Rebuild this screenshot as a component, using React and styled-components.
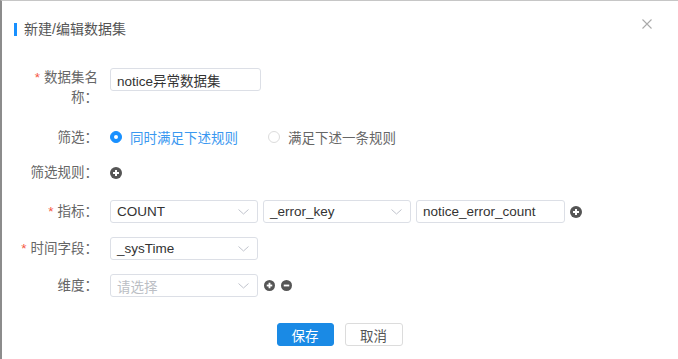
import React from 'react';
import styled, { createGlobalStyle } from 'styled-components';

const Global = createGlobalStyle`
  html, body { margin: 0; padding: 0; background: #fff; }
  body { font-family: "Liberation Sans", "Noto Sans CJK SC", sans-serif; }
  * { box-sizing: border-box; }
`;

const Dialog = styled.div`
  width: 678px;
  height: 359px;
  background: #fff;
  border-left: 2px solid #8c8c8c;
  border-top: 1px solid #c6c6c6;
  display: flex;
  flex-direction: column;
`;

const Header = styled.div`
  height: 56px;
  display: flex;
  align-items: center;
  justify-content: space-between;
  padding: 0 26px 0 12px;
`;

const Title = styled.div`
  border-left: 3px solid #1890ff;
  padding-left: 7px;
  font-size: 14px;
  line-height: 13px;
  color: #555;
`;

const Close = styled.button`
  align-self: flex-start;
  margin-top: 18px;
  width: 10px;
  height: 10px;
  padding: 0;
  border: 0;
  background: transparent;
  display: flex;
`;

const Form = styled.div`
  padding: 11px 0 0 16px;
  display: flex;
  flex-direction: column;
`;

const Row = styled.div`
  display: flex;
  align-items: flex-start;
  margin-bottom: ${p => p.$mb || 0}px;
`;

const Label = styled.div`
  width: 92px;
  flex-shrink: 0;
  padding-right: 12px;
  text-align: right;
  font-size: 13.5px;
  color: #666;
  line-height: ${p => p.$lh || 23}px;
  &::before {
    content: ${p => (p.$required ? "'*'" : "none")};
    color: #f5553f;
    margin-right: 4px;
  }
`;

const Controls = styled.div`
  display: flex;
  align-items: center;
  height: 23px;
  gap: ${p => p.$gap || 5}px;
`;

const TextInput = styled.input`
  width: ${p => p.$w || 148}px;
  height: 23px;
  border: 1px solid #dcdfe6;
  border-radius: 3px;
  padding: 0 6px;
  font-family: inherit;
  font-size: 13.5px;
  color: #333;
  outline: none;
  background: #fff;
`;

const SelectBox = styled.div`
  width: ${p => p.$w || 148}px;
  height: 23px;
  border: 1px solid #dcdfe6;
  border-radius: 3px;
  padding: 0 8px 0 6px;
  display: flex;
  align-items: center;
  justify-content: space-between;
  font-size: 13.5px;
  color: ${p => (p.$placeholder ? '#bbbec4' : '#333')};
  background: #fff;
`;

const RadioGroup = styled.div`
  display: flex;
  align-items: center;
  height: 23px;
  margin-top: -1px;
`;

const RadioItem = styled.label`
  display: flex;
  align-items: center;
  margin-left: ${p => p.$ml || 0}px;
  font-size: 13.5px;
  color: ${p => (p.$checked ? '#3a98f0' : '#666')};
`;

const RadioDot = styled.span`
  width: 12px;
  height: 12px;
  border-radius: 50%;
  border: 1px solid ${p => (p.$checked ? '#1890ff' : '#dcdcdc')};
  background: ${p => (p.$checked ? '#1890ff' : '#fff')};
  margin-right: 8px;
  display: flex;
  align-items: center;
  justify-content: center;
  &::after {
    content: '';
    width: 4px;
    height: 4px;
    border-radius: 50%;
    background: ${p => (p.$checked ? '#fff' : 'transparent')};
  }
`;

const Footer = styled.div`
  margin-top: 26px;
  display: flex;
  justify-content: center;
  gap: 11px;
  padding-right: 1px;
`;

const Button = styled.button`
  width: ${p => p.$w || 57}px;
  height: 23px;
  border-radius: 3px;
  font-family: inherit;
  font-size: 13.5px;
  padding: 0;
  border: 1px solid ${p => (p.$primary ? '#1a8ae5' : '#dcdcdc')};
  background: ${p => (p.$primary ? '#1a8ae5' : '#fff')};
  color: ${p => (p.$primary ? '#fff' : '#555')};
`;

const Chevron = () => (
  <svg width="11" height="6" viewBox="0 0 11 6">
    <path d="M0.5 0.5 L5.5 5 L10.5 0.5" fill="none" stroke="#c0c4cc" strokeWidth="1" />
  </svg>
);

const CircleIcon = ({ minus, size = 12 }) => (
  <svg width={size} height={size} viewBox="0 0 12 12">
    <circle cx="6" cy="6" r="6" fill="#555" />
    <path d="M3 6 H9" stroke="#fff" strokeWidth="2" />
    {!minus && <path d="M6 3 V9" stroke="#fff" strokeWidth="2" />}
  </svg>
);

const Select = ({ value, placeholder, w }) => (
  <SelectBox $w={w} $placeholder={!value}>
    <span>{value || placeholder}</span>
    <Chevron />
  </SelectBox>
);

export default function App() {
  return (
    <>
      <Global />
      <Dialog>
        <Header>
          <Title>新建/编辑数据集</Title>
          <Close aria-label="close">
            <svg width="10" height="10" viewBox="0 0 10 10">
              <path d="M0.5 0.5 L9.5 9.5 M9.5 0.5 L0.5 9.5" stroke="#aaa" strokeWidth="1.1" />
            </svg>
          </Close>
        </Header>
        <Form>
          <Row $mb={18}>
            <Label $required $lh={20}>数据集名称：</Label>
            <Controls>
              <TextInput $w={151} value="notice异常数据集" readOnly />
            </Controls>
          </Row>
          <Row $mb={12}>
            <Label>筛选：</Label>
            <RadioGroup>
              <RadioItem $checked>
                <RadioDot $checked />
                同时满足下述规则
              </RadioItem>
              <RadioItem $ml={30}>
                <RadioDot />
                满足下述一条规则
              </RadioItem>
            </RadioGroup>
          </Row>
          <Row $mb={16}>
            <Label>筛选规则：</Label>
            <Controls>
              <CircleIcon />
            </Controls>
          </Row>
          <Row $mb={14}>
            <Label $required>指标：</Label>
            <Controls>
              <Select value="COUNT" />
              <Select value="_error_key" />
              <TextInput $w={149} value="notice_error_count" readOnly />
              <CircleIcon />
            </Controls>
          </Row>
          <Row $mb={14}>
            <Label $required>时间字段：</Label>
            <Controls>
              <Select value="_sysTime" />
            </Controls>
          </Row>
          <Row>
            <Label>维度：</Label>
            <Controls $gap={6}>
              <Select placeholder="请选择" />
              <CircleIcon size={11} />
              <CircleIcon size={11} minus />
            </Controls>
          </Row>
        </Form>
        <Footer>
          <Button $primary>保存</Button>
          <Button $w={58}>取消</Button>
        </Footer>
      </Dialog>
    </>
  );
}
